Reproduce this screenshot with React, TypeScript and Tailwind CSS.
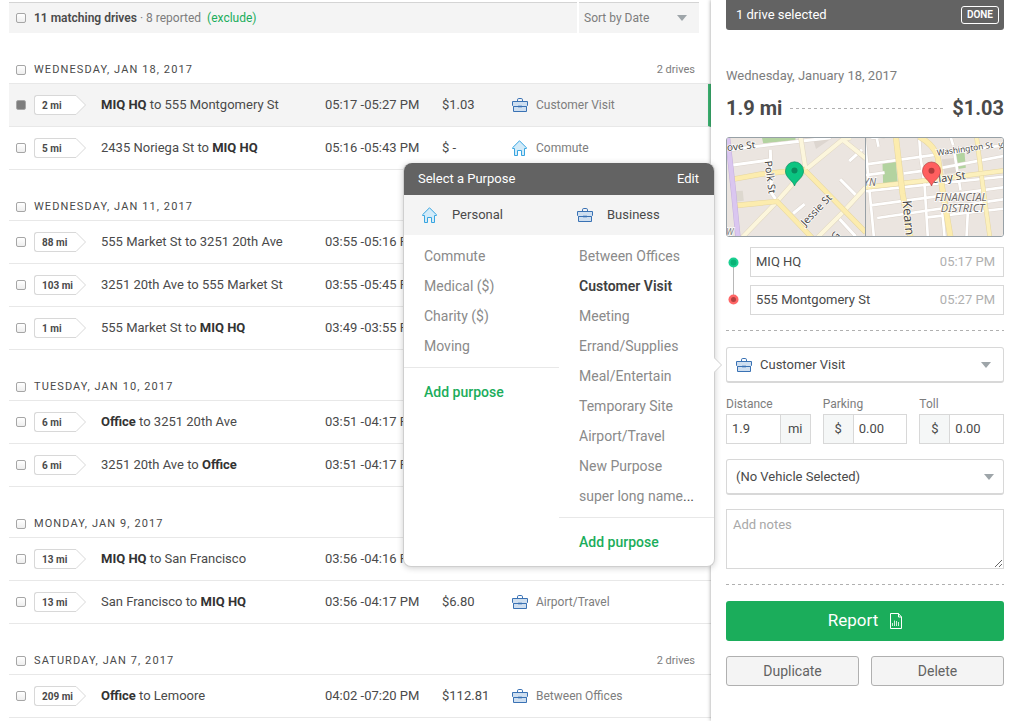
import { useState } from "react";
import type { ReactNode } from "react";
import clsx from "clsx";

type PurposeKind = "business" | "personal";

interface Drive {
  miles: number;
  from: string;
  to: string;
  time: string;
  value?: string;
  kind?: PurposeKind;
  purpose?: string;
  selected?: boolean;
}

interface DriveGroup {
  date: string;
  drives: Drive[];
}

const SAVED_PLACES = ["MIQ HQ", "Office"];

const GROUPS: DriveGroup[] = [
  {
    date: "Wednesday, Jan 18, 2017",
    drives: [
      { miles: 2, from: "MIQ HQ", to: "555 Montgomery St", time: "05:17 -05:27 PM", value: "$1.03", kind: "business", purpose: "Customer Visit", selected: true },
      { miles: 5, from: "2435 Noriega St", to: "MIQ HQ", time: "05:16 -05:43 PM", value: "$ -", kind: "personal", purpose: "Commute" },
    ],
  },
  {
    date: "Wednesday, Jan 11, 2017",
    drives: [
      { miles: 88, from: "555 Market St", to: "3251 20th Ave", time: "03:55 -05:16 PM" },
      { miles: 103, from: "3251 20th Ave", to: "555 Market St", time: "03:55 -05:45 PM" },
      { miles: 1, from: "555 Market St", to: "MIQ HQ", time: "03:49 -03:55 PM" },
    ],
  },
  {
    date: "Tuesday, Jan 10, 2017",
    drives: [
      { miles: 6, from: "Office", to: "3251 20th Ave", time: "03:51 -04:17 PM" },
      { miles: 6, from: "3251 20th Ave", to: "Office", time: "03:51 -04:17 PM" },
    ],
  },
  {
    date: "Monday, Jan 9, 2017",
    drives: [
      { miles: 13, from: "MIQ HQ", to: "San Francisco", time: "03:56 -04:16 PM" },
      { miles: 13, from: "San Francisco", to: "MIQ HQ", time: "03:56 -04:17 PM", value: "$6.80", kind: "business", purpose: "Airport/Travel" },
    ],
  },
  {
    date: "Saturday, Jan 7, 2017",
    drives: [
      { miles: 209, from: "Office", to: "Lemoore", time: "04:02 -07:20 PM", value: "$112.81", kind: "business", purpose: "Between Offices" },
    ],
  },
];

const DRIVE_COUNTS: Record<string, number> = { "Saturday, Jan 7, 2017": 2 };

const PERSONAL = ["Commute", "Medical ($)", "Charity ($)", "Moving"];
const BUSINESS = [
  "Between Offices",
  "Customer Visit",
  "Meeting",
  "Errand/Supplies",
  "Meal/Entertain",
  "Temporary Site",
  "Airport/Travel",
  "New Purpose",
  "super long name",
];

function BriefcaseIcon() {
  return (
    <svg width="16" height="14" viewBox="0 0 16 14" fill="none" stroke="#3a72b4" className="shrink-0">
      <path d="M5.5 3V1.800Q5.500.5 6.800.5h2.400q1.300 0 1.300 1.300V3" />
      <path d="M1.500 8.500h13v5h-13z" fill="#cfdff0" />
      <path d="M.5 3.500h15v4l-1 1h-13l-1-1z" fill="#cfdff0" />
      <path d="M6 8.500h4" strokeWidth="1.600" />
    </svg>
  );
}

function HouseIcon() {
  return (
    <svg width="16" height="16" viewBox="0 0 16 16" fill="none" stroke="#38a5e0" className="shrink-0">
      <path
        d="M7.500.8.6 7.700V8.500H2.500v7h3v-5h4v5h3v-7h1.900V7.700z"
        fill="#d2ebf9"
        strokeLinejoin="round"
      />
    </svg>
  );
}

function ReportIcon() {
  return (
    <svg width="12" height="16" viewBox="0 0 12 16" fill="none" stroke="#fff">
      <path d="M.5.5h8l3 3.500v11.500H.5z" />
      <path d="M8.500.5V4h3" />
      <path d="M2.500 13V10M4.500 13V7.500M6.500 13V8M8.500 13V9" strokeWidth=".8" />
    </svg>
  );
}

function Caret({ className }: { className?: string }) {
  return (
    <svg width="10" height="6" viewBox="0 0 10 6" className={clsx("pointer-events-none shrink-0", className)}>
      <path d="M0 0h10L5 6z" fill="#9ea5a9" />
    </svg>
  );
}

function PurposeIcon({ kind }: { kind: PurposeKind }) {
  return kind === "business" ? <BriefcaseIcon /> : <HouseIcon />;
}

function Checkbox({ label, checked }: { label: string; checked?: boolean }) {
  return (
    <input
      type="checkbox"
      aria-label={label}
      defaultChecked={checked}
      className="size-2.5 shrink-0 appearance-none rounded-[2px] border border-[#a6a6a6] bg-linear-to-b from-white to-[#eeeeee] checked:from-[#7d7d7d] checked:to-[#7d7d7d]"
    />
  );
}

function MilesTag({ miles }: { miles: number }) {
  return (
    <span className="flex h-5 w-[52px] shrink-0">
      <span className="w-[42px] rounded-l-[3px] border border-r-0 border-[#d8d8d8] bg-white pl-[7px] text-[10px] leading-[19px] font-bold whitespace-nowrap text-[#4a4a4a]">
        {miles} mi
      </span>
      <svg width="10" height="20" viewBox="0 0 10 20" fill="#fff" stroke="#d8d8d8" className="shrink-0">
        <path d="M0 .5 9.500 10 0 19.500" />
      </svg>
    </span>
  );
}

function Place({ name }: { name: string }) {
  return SAVED_PLACES.includes(name) ? <b className="font-bold text-[#333]">{name}</b> : <>{name}</>;
}

function DriveRow({ drive }: { drive: Drive }) {
  return (
    <li
      className={clsx(
        "flex h-[43px] items-center border-b border-[#e8e8e8] pl-[7px] text-[13px]",
        drive.selected && "border-r-3 border-r-[#3cb371] bg-[#f4f4f4]",
      )}
    >
      <Checkbox label={`Select drive from ${drive.from} to ${drive.to}`} checked={drive.selected} />
      <span className="ml-2">
        <MilesTag miles={drive.miles} />
      </span>
      <span className="ml-[15px] min-w-0 flex-1 truncate">
        <Place name={drive.from} /> to <Place name={drive.to} />
      </span>
      <span className="w-[117px] shrink-0">{drive.time}</span>
      <span className="w-[70px] shrink-0">{drive.value}</span>
      <span className={clsx("flex shrink-0 items-center gap-2 text-xs text-[#7d7d7d]", drive.selected ? "w-[196px]" : "w-[199px]")}>
        {drive.kind && <PurposeIcon kind={drive.kind} />}
        {drive.purpose}
      </span>
    </li>
  );
}

function DriveList() {
  return (
    <main className="min-w-0 flex-1 pt-0.5 pl-[9px]">
      <div className="mr-3 flex h-[31px] gap-0.5 text-xs">
        <div className="flex flex-1 items-center border-t border-[#d4d4d4] bg-[#f4f4f4] pl-[7px]">
          <Checkbox label="Select all drives" />
          <b className="ml-2 font-semibold">11 matching drives</b>
          <span className="ml-[3px] text-[#7d7d7d]">· 8 reported</span>
          <button type="button" className="ml-1.5 text-[#1bad5b]">(exclude)</button>
        </div>
        <div className="relative w-[120px] border-t border-[#d4d4d4] bg-[#f4f4f4]">
          <select aria-label="Sort drives" className="h-full w-full appearance-none pl-[5px] text-[#7d7d7d]">
            <option>Sort by Date</option>
          </select>
          <Caret className="absolute top-3 right-3" />
        </div>
      </div>

      {GROUPS.map((group) => (
        <section key={group.date}>
          <header className="flex h-[51px] items-end border-b border-[#e8e8e8] pr-4 pb-[5px] pl-[7px] text-[11px] leading-4">
            <span className="flex h-4 items-center gap-2">
              <Checkbox label={`Select ${group.date}`} />
              <h2 className="tracking-widest uppercase">{group.date}</h2>
            </span>
            <span className="ml-auto text-[#7d7d7d]">{DRIVE_COUNTS[group.date] ?? group.drives.length} drives</span>
          </header>
          <ul>
            {group.drives.map((drive, i) => (
              <DriveRow key={i} drive={drive} />
            ))}
          </ul>
        </section>
      ))}
    </main>
  );
}

interface PurposeColumnProps {
  items: string[];
  current: string;
  onPick: (name: string) => void;
}

function PurposeColumn({ items, current, onPick }: PurposeColumnProps) {
  return (
    <div className="flex-1">
      <ul className="border-b border-[#e8e8e8] py-1.5">
        {items.map((name) => (
          <li key={name}>
            <button
              type="button"
              onClick={() => onPick(name)}
              className={clsx(
                "block h-[30px] w-full pl-5 text-left whitespace-nowrap",
                name === current ? "font-semibold text-[#3f3f3f]" : "text-[#8a8a8a]",
              )}
            >
              {name}
              {name === "super long name" && <span className="text-[#4a4a4a]">...</span>}
            </button>
          </li>
        ))}
      </ul>
      <button type="button" className="h-12 pl-5 font-medium text-[#1bad5b]">
        Add purpose
      </button>
    </div>
  );
}

function PurposeMenu({ current, onPick }: { current: string; onPick: (name: string) => void }) {
  return (
    <div
      role="dialog"
      aria-label="Select a Purpose"
      className="absolute -top-[184px] right-full mr-[11px] w-[312px] rounded-lg border border-t-0 border-[#cfcfcf] bg-white shadow-[0_1px_6px_rgba(0,0,0,0.2)]"
    >
      <div className="flex h-8 items-center justify-between rounded-t-lg bg-[#636363] pr-[15px] pl-[14px] text-[13px] text-white">
        <span>Select a Purpose</span>
        <button type="button">Edit</button>
      </div>
      <div className="flex h-10 bg-[#f4f4f4] text-[13px]">
        <span className="flex flex-1 items-center gap-3.5 pl-[18px]">
          <HouseIcon /> Personal
        </span>
        <span className="flex flex-1 items-center gap-3.5 pl-[18px]">
          <BriefcaseIcon /> Business
        </span>
      </div>
      <div className="flex items-start text-sm">
        <PurposeColumn items={PERSONAL} current={current} onPick={onPick} />
        <PurposeColumn items={BUSINESS} current={current} onPick={onPick} />
      </div>
      <svg width="8" height="16" viewBox="0 0 8 16" fill="#fff" stroke="#cfcfcf" className="absolute top-[194px] -right-2">
        <path d="M0 .5 7.500 8 0 15.500" />
      </svg>
    </div>
  );
}

function Pin({ x, y, fill, edge }: { x: number; y: number; fill: string; edge: string }) {
  return (
    <g transform={`translate(${x} ${y})`}>
      <path d="M0 44C-5 27-27 20-27-1A27 27 0 0 1 27-1C27 20 5 27 0 44z" fill={fill} stroke={edge} strokeWidth="2" />
      <circle r="9" cy="-2" fill={edge} />
    </g>
  );
}

function Roads({ d, width, color, edge }: { d: string; width: number; color: string; edge: string }) {
  return (
    <g fill="none">
      <path d={d} stroke={edge} strokeWidth={width + 3} />
      <path d={d} stroke={color} strokeWidth={width} />
    </g>
  );
}

function StartMap() {
  return (
    <svg viewBox="21 24 411 294" preserveAspectRatio="xMidYMid slice" role="img" aria-label="Start location" className="h-full w-1/2 bg-[#ebe5e0] font-['Noto_Sans',sans-serif]">
      <path d="M125 24h100v8l-96 9z" fill="#b3d3a0" />
      <path d="M276 24h60l-50 34z" fill="#ddd6d0" />
      <path d="M42 184l26-2 3 30-24 2z" fill="#ddd8cf" />
      <Roads d="M30 60 160 44 330 24M34 106 150 90M150 60l4 130 18 26M385 94l38-34M358 148l50 50M218 250l34-28M352 262l52 56M362 24l70 64" width={9} color="#fff" edge="#dcd4cc" />
      <Roads d="M66 322 170 214 250 124 365 30 390 24M240 20l16 104M290 322 372 240l62-68M365 30l70 56" width={12} color="#fcf6dc" edge="#e0d6c0" />
      <Roads d="M36 148l84-15 134-14M46 226l124-12 104 108M254 122 434 306" width={13} color="#fcecae" edge="#e6d6a0" />
      <Roads d="M22 20q18 150 32 304" width={13} color="#dac6f0" edge="#c4b0dc" />
      <g fill="#4a4744" stroke="#fff" strokeWidth="4" paintOrder="stroke" fontSize="31">
        <text transform="translate(22 64) rotate(-6)" fontSize="30">ove St</text>
        <text transform="translate(133 94) rotate(83)">Polk St</text>
        <text transform="translate(254 289) rotate(-46)">Jessie St</text>
        <text transform="translate(344 332) rotate(-46)">G</text>
        <text x="19" y="315" fontStyle="italic" fontSize="25" fill="#777">W</text>
      </g>
      <Pin x={222} y={124} fill="#0bc481" edge="#098a5e" />
    </svg>
  );
}

function EndMap() {
  return (
    <svg viewBox="435 24 414 294" preserveAspectRatio="xMidYMid slice" role="img" aria-label="End location" className="h-full w-1/2 border-l border-[#97a0a6] bg-[#ebe5e0] font-['Noto_Sans',sans-serif]">
      <path d="M486 100l40-5 6 68-44 6zM706 70l26-3 4 46-24 4z" fill="#b3d3a0" />
      <path d="M664 88l38-4 4 44-34 4z" fill="#ddd6d0" />
      <Roads d="M432 104 850 46M432 136l60-8M550 130l90-12 210-40M432 184 850 140M450 226 850 172M470 264 850 208M432 20l28 300M468 20l6 30M492 20l-40 4M596 20l4 62 12 80 10 160M690 20l8 26M672 318l-8-90M738 322l4-76M850 236l-230 26M700 60l20 120" width={8} color="#fff" edge="#dcd4cc" />
      <Roads d="M768 20l18 140 22 162" width={11} color="#fcf0bc" edge="#e6d6a0" />
      <Roads d="M432 172l200-22 218-28" width={12} color="#fcf0bc" edge="#e6d6a0" />
      <Roads d="M526 20l20 170 24 132M596 20q44 24 56 62l14 98 24 142" width={15} color="#fcecae" edge="#e6d6a0" />
      <g fill="#4a4744" stroke="#fff" strokeWidth="4" paintOrder="stroke">
        <text transform="translate(650 77) rotate(-8)" fontSize="25">Washington St</text>
        <text transform="translate(634 160) rotate(-7)" fontSize="33">Clay St</text>
        <text transform="translate(546 212) rotate(85)" fontSize="38">Kearn</text>
        <text transform="translate(834 38) rotate(80)" fontSize="24">St</text>
        <g fontStyle="italic" fill="#726c69" fontSize="33">
          <text x="430" y="168" fontSize="30">YN</text>
          <text x="643" y="213">FINANCIAL</text>
          <text x="661" y="246">DISTRICT</text>
        </g>
      </g>
      <Pin x={633} y={124} fill="#ff5f5f" edge="#b03c3c" />
    </svg>
  );
}

function StopField({ label, place, time }: { label: string; place: string; time: string }) {
  return (
    <div className="flex h-[30px] items-center border border-[#d8d8d8] px-2 pl-[5px]">
      <input aria-label={label} defaultValue={place} className="min-w-0 flex-1 outline-none" />
      <span className="text-[#b0b0b0]">{time}</span>
    </div>
  );
}

function Unit({ children, className }: { children: ReactNode; className: string }) {
  return <span className={clsx("flex w-[30px] shrink-0 items-center justify-center border-[#d8d8d8] bg-[#f5f7f7]", className)}>{children}</span>;
}

interface AmountFieldProps {
  label: string;
  value: string;
  prefix?: string;
  suffix?: string;
}

function AmountField({ label, value, prefix, suffix }: AmountFieldProps) {
  return (
    <label className="block min-w-0 text-xs leading-5 text-[#7d7d7d]">
      {label}
      <span className="flex h-[30px] border border-[#d8d8d8] text-[13px] text-[#4a4a4a]">
        {prefix && <Unit className="border-r">{prefix}</Unit>}
        <input defaultValue={value} className="w-full min-w-0 px-[5px] outline-none" />
        {suffix && <Unit className="border-l">{suffix}</Unit>}
      </span>
    </label>
  );
}

function Divider() {
  return (
    <div
      role="separator"
      className="h-px bg-[repeating-linear-gradient(90deg,#b0b0b0_0_3px,transparent_3px_6px)]"
    />
  );
}

function DetailPanel() {
  const [purpose, setPurpose] = useState("Customer Visit");
  const [open, setOpen] = useState(true);

  return (
    <aside className="relative w-[318px] shrink-0 bg-white pr-[25px] pl-[15px] text-[13px] shadow-[0_0_4px_rgba(0,0,0,0.4)]">
      <div className="flex h-[30px] items-center justify-between rounded-b-[3px] bg-[#636363] pr-[5px] pl-2.5 text-white">
        <span>1 drive selected</span>
        <button type="button" className="h-[18px] rounded-[3px] border border-white px-[5px] text-[10px] leading-4 font-semibold">
          DONE
        </button>
      </div>

      <p className="mt-9 leading-5 text-[#7d7d7d]">Wednesday, January 18, 2017</p>
      <div className="mt-2 flex h-7 items-center gap-2 text-xl font-bold">
        <span>1.9 mi</span>
        <div className="flex-1">
          <Divider />
        </div>
        <span>$1.03</span>
      </div>

      <div className="mt-[15px] flex h-[100px] overflow-hidden rounded-[3px] border border-[#97a0a6]">
        <StartMap />
        <EndMap />
      </div>

      <div className="mt-2.5 flex gap-2.5">
        <svg width="14" height="68" viewBox="0 0 14 68">
          <path d="M7.500 16v37" stroke="#b8b8b8" />
          <circle cx="7.500" cy="15.500" r="5" fill="#19cf90" />
          <circle cx="7.500" cy="15.500" r="3" fill="#0ab376" />
          <circle cx="7.500" cy="52.500" r="5" fill="#ff6666" />
          <circle cx="7.500" cy="52.500" r="2.500" fill="#b34040" />
        </svg>
        <div className="grid flex-1 gap-2">
          <StopField label="Start" place="MIQ HQ" time="05:17 PM" />
          <StopField label="End" place="555 Montgomery St" time="05:27 PM" />
        </div>
      </div>

      <div className="my-4 mt-[15px]">
        <Divider />
      </div>

      <div className="relative">
        <button
          type="button"
          aria-haspopup="dialog"
          aria-expanded={open}
          onClick={() => setOpen(!open)}
          className="flex h-9 w-full items-center gap-2 rounded-[3px] border border-b-2 border-[#d8d8d8] pr-3 pl-[9px] text-left"
        >
          <PurposeIcon kind={PERSONAL.includes(purpose) ? "personal" : "business"} />
          <span className="flex-1">{purpose}</span>
          <Caret />
        </button>
        {open && <PurposeMenu current={purpose} onPick={setPurpose} />}
      </div>

      <div className="mt-[11px] grid grid-cols-3 gap-3">
        <AmountField label="Distance" value="1.9" suffix="mi" />
        <AmountField label="Parking" value="0.00" prefix="$" />
        <AmountField label="Toll" value="0.00" prefix="$" />
      </div>

      <div className="relative mt-[15px]">
        <select aria-label="Vehicle" className="block h-9 w-full appearance-none rounded-[3px] border border-b-2 border-[#d8d8d8] pl-[9px]">
          <option>(No Vehicle Selected)</option>
        </select>
        <Caret className="absolute top-[15px] right-2.5" />
      </div>

      <textarea
        aria-label="Notes"
        placeholder="Add notes"
        className="mt-3.5 block h-[60px] w-full border border-[#d8d8d8] px-1.5 py-[5px] outline-none placeholder:text-[#a8a8a8]"
      />

      <div className="my-4 mt-[15px]">
        <Divider />
      </div>

      <button type="button" className="flex h-10 w-full items-center justify-center gap-3 rounded-[3px] bg-[#1bad5b] text-[17px] text-white">
        Report
        <ReportIcon />
      </button>
      <div className="mt-[15px] grid grid-cols-2 gap-3 text-sm text-[#636363]">
        <button type="button" className="h-[30px] rounded-[3px] border border-[#b0b0b0] bg-[#f4f4f4]">Duplicate</button>
        <button type="button" className="h-[30px] rounded-[3px] border border-[#b0b0b0] bg-[#f4f4f4]">Delete</button>
      </div>
    </aside>
  );
}

export default function App() {
  return (
    <div className="flex min-h-screen bg-white font-[Roboto,'Liberation_Sans',sans-serif] text-[#4a4a4a]">
      <DriveList />
      <DetailPanel />
    </div>
  );
}
